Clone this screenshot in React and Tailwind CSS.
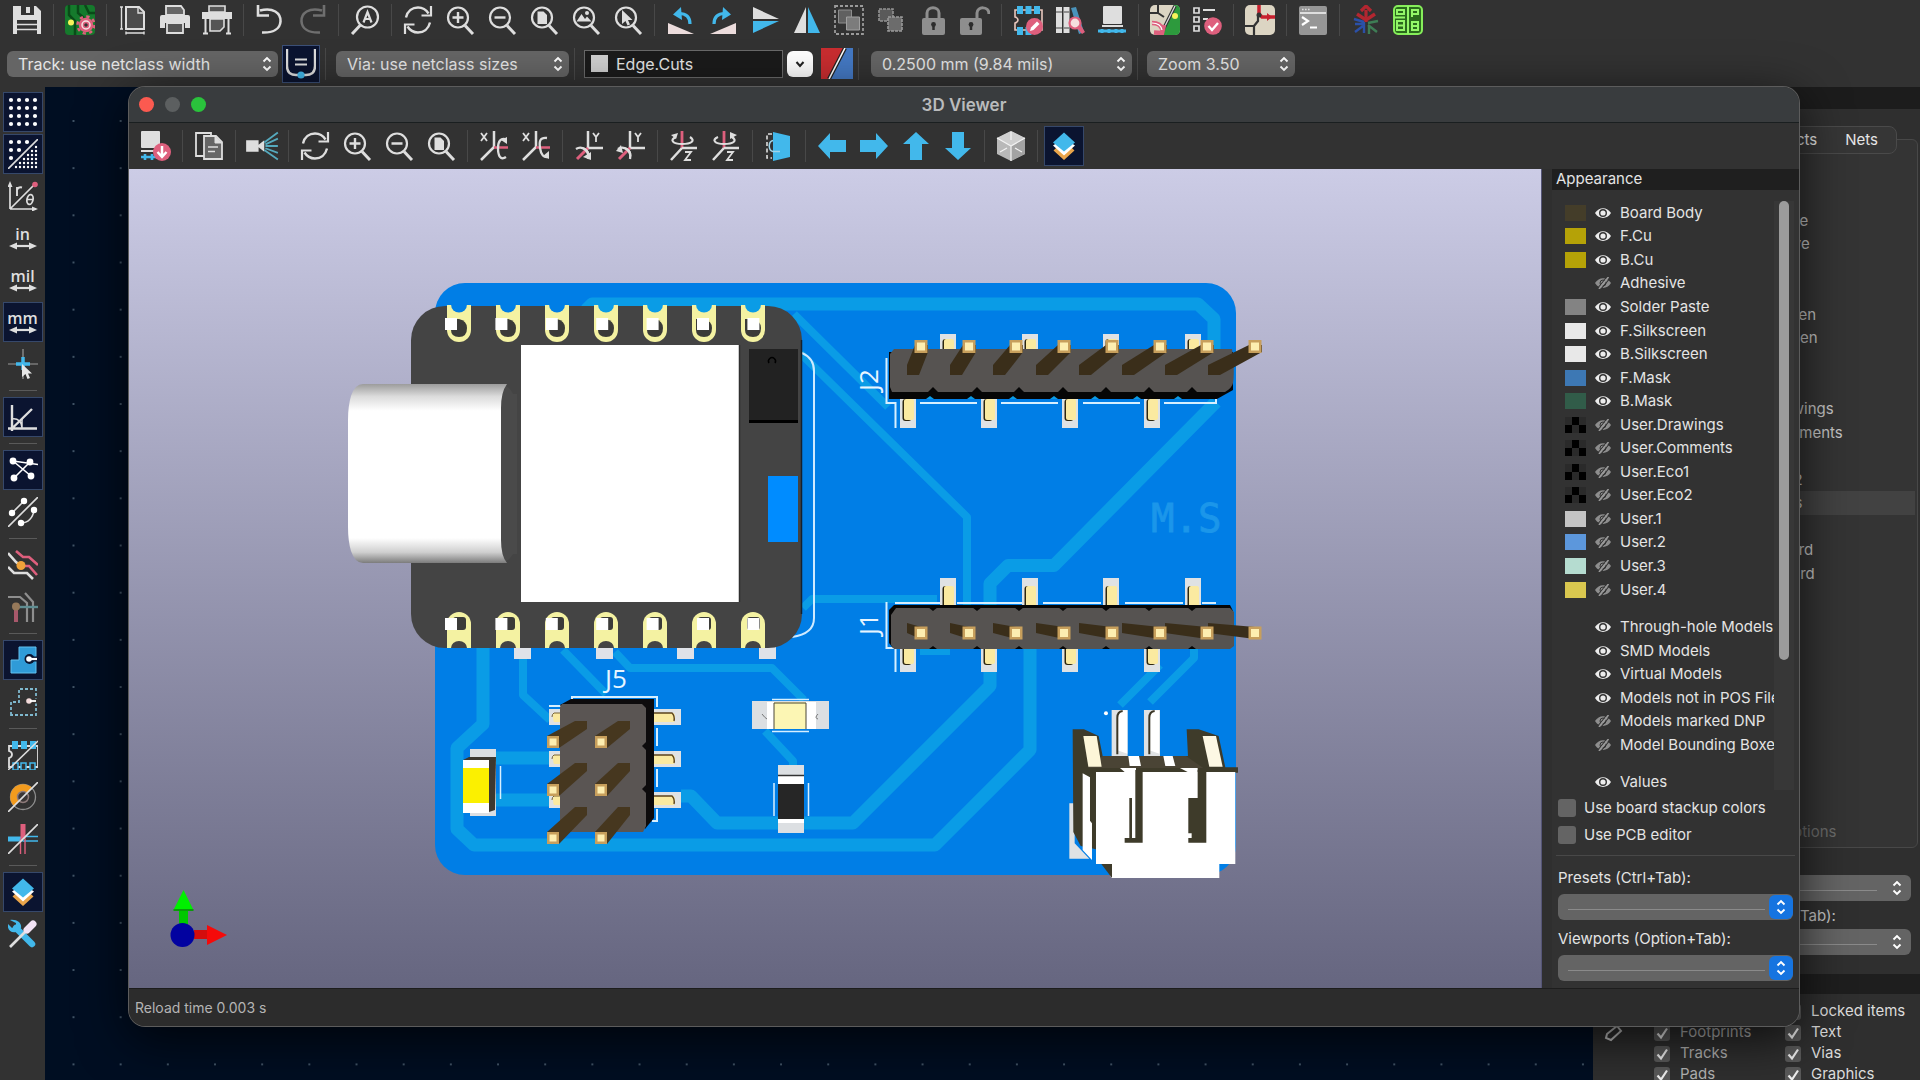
import React from 'react';
import clsx from 'clsx';

const W = '#dedede';
const B = '#42b8eb';
const P = '#de5f7d';

/* ---------- shared icon pieces, all on a 30x30 grid ---------- */

function Svg({ children, className = 'size-[30px]' }) {
  return (
    <svg viewBox="0 0 30 30" className={clsx('shrink-0', className)} fill="none" aria-hidden="true">
      {children}
    </svg>
  );
}

function Lens({ children }) {
  return (
    <Svg>
      <circle cx="13" cy="12.5" r="10" stroke={W} strokeWidth="2.2" />
      <path d="M20 20.5 28 29" stroke={W} strokeWidth="3" />
      {children}
    </Svg>
  );
}

const DocGlyph = <path d="M8.5 6.5h6l3.5 3.5v9H8.5z" fill={W} />;

const RefreshIcon = () => (
  <Svg>
    <path d="M3 12.5C4.500 6 9.500 2.500 15 2.500c4.500 0 8 2 10.500 6M27 17.500C25.500 24 20.500 27.500 15 27.500c-4.500 0-8-2-10.500-6" stroke={W} strokeWidth="2.4" />
    <path d="M28 1v9.500h-9.500M2 29v-9.500h9.500" stroke={W} strokeWidth="2.2" />
  </Svg>
);
const ZoomInIcon = () => <Lens><path d="M13 7v11M7.500 12.500h11" stroke={W} strokeWidth="2.4" /></Lens>;
const ZoomOutIcon = () => <Lens><path d="M7.500 12.500h11" stroke={W} strokeWidth="2.4" /></Lens>;
const ZoomFitIcon = () => <Lens>{DocGlyph}</Lens>;

const LayersIcon = () => (
  <Svg>
    <path d="M15 29 4.500 19.500 8 16l7 6 7-6 3.500 3.500z" fill="#e9a44a" />
    <path d="M15 24.500 4 14.500l3-2 8 6.500 8-6.500 3 2z" fill="#fff" />
    <path d="M15 1.500 26 11.500 15 20.500 4 11.500z" fill={B} />
  </Svg>
);

/* ---------- main toolbar icons ---------- */

const SaveIcon = () => (
  <Svg>
    <path d="M1 1h23l5 5v23H1z" fill={W} />
    <path d="M9 1h13v9H9zM5 15h20v14H5z" fill="#333" />
    <path d="M14 2h4v6h-4z" fill={W} />
    <path d="M5 19.500h20M5 24.500h20" stroke={W} strokeWidth="1.6" />
  </Svg>
);
const BoardSetupIcon = () => (
  <Svg>
    <rect width="30" height="30" rx="4" fill="#157a2c" />
    <path d="M4 0v10l6 6v14M13 0v8l6 5M20 0l4 8h6" stroke="#0a4a18" strokeWidth="2.500" />
    <circle cx="6" cy="17.500" r="3" fill="#f6f35a" />
    <circle cx="21" cy="20" r="6" fill="#f3e3e3" stroke={P} strokeWidth="2.500" />
    <circle cx="21" cy="20" r="8.500" stroke={P} strokeWidth="2.500" strokeDasharray="3.300 3.375" />
    <circle cx="21" cy="20" r="2.500" fill="#333" stroke={P} strokeWidth="1.500" />
  </Svg>
);
const PageIcon = () => (
  <Svg>
    <path d="M8 2h13l5 5v17H8z" fill="#4c4c4c" stroke={W} strokeWidth="2" />
    <path d="M20 2v6h6M3.500 2v22M2 2h3M2 24h3M8 28h18M8 26.500v3M26 26.500v3" stroke={W} strokeWidth="1.400" />
  </Svg>
);
const PrintIcon = () => (
  <Svg>
    <path d="M6 1h15l3 4v5H6z" fill="#666" stroke={W} strokeWidth="1.800" />
    <path d="M2 10h26q2 0 2 2v11h-5v-5H5v5H0V12q0-2 2-2z" fill={W} />
    <path d="M7 18h16v10H7z" fill="#555" stroke={W} strokeWidth="1.800" />
  </Svg>
);
const PlotIcon = () => (
  <Svg>
    <path d="M7 1h16v6H7z" fill="#555" stroke={W} strokeWidth="1.600" />
    <path d="M0 7h30v7H0z" fill={W} />
    <path d="M8 14h14v8l-4 4H8z" fill="#555" stroke={W} strokeWidth="1.600" />
    <path d="M3.500 14v14M26.500 14v14M1 28.500h5M24 28.500h5" stroke={W} strokeWidth="2" />
  </Svg>
);
const UndoIcon = () => (
  <Svg>
    <path d="M5 5.500C18 2 26 8 25.500 16.500 25 24 18 28 7 27.500M3 0v10.500h11" stroke={W} strokeWidth="2.600" />
  </Svg>
);
const RedoIcon = () => (
  <Svg>
    <g transform="translate(30 0) scale(-1 1)">
      <path d="M5 5.500C18 2 26 8 25.500 16.500 25 24 18 28 7 27.500M3 0v10.500h11" stroke="#6f6f6f" strokeWidth="2.600" />
    </g>
  </Svg>
);
const FindIcon = () => (
  <Svg>
    <circle cx="17.500" cy="12" r="10.500" stroke={W} strokeWidth="2.200" />
    <path d="M10.500 20 2 29" stroke={W} strokeWidth="3" />
    <path d="M13.500 17.500 17.500 7l4 10.500M15 14h5" stroke={W} strokeWidth="2.200" />
  </Svg>
);
const ZoomObjectsIcon = () => (
  <Lens>
    <path d="M5.500 16.500 10.500 9l3.500 5 2-2.500 4.500 5z" fill={W} />
    <circle cx="16" cy="8" r="2" fill={W} />
  </Lens>
);
const ZoomSelectIcon = () => <Lens><path d="M9 5v14l3.500-3 2 4.500 2.500-1-2-4.500h4.500z" fill={W} /></Lens>;
const RotateCcwIcon = () => (
  <Svg>
    <path d="M2 29V18l26 11z" fill="#ecdcdc" />
    <path d="M24 19C24 12 20 8.500 13 8.500" stroke={B} strokeWidth="3.200" />
    <path d="M15 2 7 9.500 16 15z" fill={B} />
  </Svg>
);
const RotateCwIcon = () => (
  <Svg>
    <path d="M28 29V18L2 29z" fill="#ecdcdc" />
    <path d="M6 19C6 12 10 8.500 17 8.500" stroke={B} strokeWidth="3.200" />
    <path d="m15 2 8 7.500L14 15z" fill={B} />
  </Svg>
);
const MirrorVIcon = () => (
  <Svg>
    <path d="M3 2 29 14H3z" fill={W} />
    <path d="M3 28 29 16H3z" fill={B} />
  </Svg>
);
const MirrorHIcon = () => (
  <Svg>
    <path d="M2 28 14 2v26z" fill={W} />
    <path d="M28 28 16 2v26z" fill={B} />
  </Svg>
);
const GroupIcon = () => (
  <Svg>
    <rect x="1" y="1" width="28" height="28" stroke="#9a9a9a" strokeWidth="1.800" strokeDasharray="3 2" />
    <path d="M4.500 5h13v13h-13z" fill="#606060" stroke="#8d8d8d" />
    <path d="M12.500 12h13v13h-13z" fill="#7c7c7c" stroke="#a0a0a0" />
  </Svg>
);
const UngroupIcon = () => (
  <Svg>
    <path d="M3 4h14v12H3z" fill="#5a5a5a" stroke="#939393" strokeDasharray="3 1" strokeWidth="1.600" />
    <path d="M12 12h14v14H12z" fill="#6c6c6c" stroke="#9a9a9a" strokeDasharray="3 1" strokeWidth="1.600" />
  </Svg>
);
const LockIcon = () => (
  <Svg>
    <path d="M9 14V8c0-7 12-7 12 0v6" stroke="#8e8e8e" strokeWidth="3" />
    <rect x="4" y="13" width="23" height="17" rx="2" fill="#8e8e8e" />
    <path d="M15.500 19v6" stroke="#2c2c2c" strokeWidth="2.500" />
    <circle cx="15.500" cy="19.500" r="2.400" fill="#2c2c2c" />
  </Svg>
);
const UnlockIcon = () => (
  <Svg>
    <path d="M17 14V8c0-7 12-7 12 1" stroke="#8e8e8e" strokeWidth="3" />
    <rect x="0" y="13" width="22" height="17" rx="2" fill="#8e8e8e" />
    <path d="M11 19v6" stroke="#2c2c2c" strokeWidth="2.500" />
    <circle cx="11" cy="19.500" r="2.400" fill="#2c2c2c" />
  </Svg>
);
const FootprintEditorIcon = () => (
  <Svg>
    <path d="M3 5h26v20H2v-7c4-1 4-5 0-6V5z" stroke="#e8c7bd" strokeWidth="1.600" />
    <path d="M4 1h6v8H4zM12.500 1h6v8h-6zM21 1h6v8h-6zM4 22h6v8H4zM12.500 22h6v8h-6z" fill={B} />
    <circle cx="21.500" cy="21.500" r="8.500" fill={P} />
    <path d="m17 26 1-3.500 6-6 2.500 2.500-6 6z" fill="#fff" />
  </Svg>
);
const LibraryIcon = () => (
  <Svg>
    <path d="M1 2h6v26H1zM8.500 2h6v26h-6z" fill={W} />
    <path d="M1 7h6M1 23h6M8.500 7h6M8.500 23h6" stroke="#777" strokeWidth="1.500" />
    <path d="m16 3 5-1 8 25-5 2z" fill="#4a93bb" />
    <path d="m21 22 6 7 3-2-5-8z" fill={P} />
    <circle cx="20" cy="18" r="5.500" fill="#f5dede" stroke={P} strokeWidth="2.200" />
  </Svg>
);
const UpdatePcbIcon = () => (
  <Svg>
    <rect x="6" y="1" width="19" height="18" rx="1" fill={W} />
    <path d="M5 21h21" stroke={W} strokeWidth="2" />
    <path d="M1 26h28M5 24v4M12 24v4M19 24v4M25 24v4" stroke={B} strokeWidth="3" />
  </Svg>
);
const SchematicSyncIcon = () => (
  <Svg>
    <rect width="30" height="30" rx="5" fill="#dcd5c3" />
    <path d="M24 0h1q5 0 5 5v20q0 5-5 5H11z" fill="#2d9a3d" />
    <path d="M8 0v8H0M8 8l6 4" stroke="#333" strokeWidth="2" />
    <path d="M25 1 12 27" stroke="#333" strokeWidth="3.500" />
    <path d="M25 1 12 27" stroke="#ddd" strokeWidth="1.200" />
    <circle cx="25" cy="11" r="3" fill="#f6f35a" />
    <path d="M2 18c6 0 9 2 10 6M4 27.500l8 .5 2-8" stroke={P} strokeWidth="4.500" />
    <path d="M2 18c6 0 9 2 10 7" stroke="#fff" strokeWidth="1.200" />
  </Svg>
);
const DrcIcon = () => (
  <Svg>
    <path d="M2 3h5v5H2zM2 12h5v5H2zM2 21h5v5H2z" stroke={W} strokeWidth="1.700" />
    <path d="M11 5h12M11 14h5" stroke={W} strokeWidth="2" />
    <circle cx="21" cy="21" r="8.800" fill={P} />
    <path d="m16.500 21 3.500 4 6-7" stroke="#fff" strokeWidth="2.400" />
  </Svg>
);
const SchematicIcon = () => (
  <Svg>
    <rect width="30" height="30" rx="5" fill="#dcd5c3" />
    <path d="M0 21h9v9M9 21l4-5V10" stroke="#333" strokeWidth="2.200" />
    <path d="M14 0v9l3 3h13" stroke="#c8202f" strokeWidth="3.500" />
    <circle cx="14" cy="10" r="2.500" fill="#333" />
    <path d="M22 8v8l5-4z" fill="#c8202f" />
  </Svg>
);
const ConsoleIcon = () => (
  <Svg>
    <rect x="1" y="1" width="28" height="29" rx="2" fill="#969696" />
    <path d="M2 8h26" stroke="#dedede" strokeWidth="2" />
    <path d="M4 4.500h8" stroke={W} strokeWidth="1.600" strokeDasharray="1.600 1.400" />
    <path d="m4 12 6 4-6 4M12 22.500h7" stroke="#fff" strokeWidth="2.200" />
  </Svg>
);
const PluginTreeIcon = () => (
  <Svg>
    <path d="M15 14V5M10 6l5-5 5 5" stroke="#b32630" strokeWidth="3.200" />
    <path d="M6 9l9 6 9-6M15 13v4" stroke="#b32630" strokeWidth="3.400" />
    <path d="M13 17 3 14M12 19H4M12 21l-8 6M13 17v11" stroke="#2b50a8" strokeWidth="2.400" />
    <path d="M17 18l10-2M17 20l9 7M18 20v9" stroke="#3e7d55" strokeWidth="2.400" />
  </Svg>
);
const PluginGridIcon = () => (
  <Svg>
    <rect x="1" y="1" width="28" height="28" rx="4" fill="#2a6a1c" stroke="#86ee5a" strokeWidth="2" />
    <path d="M15 1v28M1 12.500h11M4 5h7v4H4zM4 16h7v9H4zM4 20.500h7M19 12V5h6v4h-5M19 17h6v8h-6zM19 21h6" stroke="#93f768" strokeWidth="2" />
  </Svg>
);

/* ---------- 3D viewer icons ---------- */

const ReloadBoardIcon = () => (
  <Svg>
    <rect x="0" y="0" width="19" height="17" rx="1" fill={W} />
    <path d="M0 20h19" stroke={W} strokeWidth="2" />
    <path d="M0 26h22M4 23v6M11 23v6" stroke={B} strokeWidth="2.600" />
    <circle cx="21" cy="21" r="9" fill={P} />
    <path d="M21 15v10M16.500 21l4.500 5 4.500-5" stroke="#fff" strokeWidth="2.500" />
  </Svg>
);
const CopyIcon = () => (
  <Svg>
    <path d="M2 2h15v23H2z" stroke={W} strokeWidth="1.800" />
    <path d="M10 5h12l6 6v17H10z" fill="#666" stroke={W} strokeWidth="1.800" />
    <path d="M21 5v7h7" fill={W} stroke={W} />
    <path d="M14 16h10M14 20.500h7" stroke={W} strokeWidth="1.600" />
  </Svg>
);
const RaytraceIcon = () => (
  <Svg className="size-[34px]">
    <path d="M1 10h11v10H1zM12 14l5-4v10l-5-4z" fill={W} />
    <path d="m17 12 12-9M18 13.500l11-5M18 15h11M18 17l11 4M17 18.500 29 27" stroke="#55a9bd" strokeWidth="1.600" />
  </Svg>
);

function AxisIcon({ label, flip }) {
  if (label === 'X') {
    return (
      <Svg>
        <path d="M15 0v16M15 16 2 29" stroke={W} strokeWidth="2.500" />
        <path d="M15 16.500h14" stroke={P} strokeWidth="2.500" />
        <path d="m2 2 6 8M8 2l-6 8" stroke={W} strokeWidth="1.800" />
        <path d={flip ? 'M26 7c-7-1-8 3-7 10s4 10 8 9' : 'M27 26c-6 4-8-2-8-9s3-10 7-9'} stroke={W} strokeWidth="2.300" />
        <path d={flip ? 'M28 20v8l-6-3z' : 'M28 13V6l-6 3z'} fill={W} />
      </Svg>
    );
  }
  if (label === 'Y') {
    return (
      <Svg>
        <path d="M14 0v17h15" stroke={W} strokeWidth="2.500" />
        <path d="M14 17 3 28" stroke={P} strokeWidth="3" />
        <path d="m19 2 3 4 3-4M22 6v5" stroke={W} strokeWidth="1.800" />
        <path d="M2 18c6-4 14 2 12 10" stroke={W} strokeWidth="2.300" />
        <path d={flip ? 'M0 20l7 2-2-8z' : 'M9 26l8 3v-8z'} fill={W} />
        <path d="M7 17c4-1 9 4 7 9" stroke={W} strokeWidth="1.800" />
      </Svg>
    );
  }
  return (
    <Svg>
      <path d="M13 0v17" stroke={P} strokeWidth="2.800" />
      <path d="M13 17h15M13 17 2 29" stroke={W} strokeWidth="2.500" />
      <path d="M16 21h6l-6 8h6" stroke={W} strokeWidth="1.800" />
      <path d="M7 6c-7 3-3 7 6 7s14-3 8-7" stroke={W} strokeWidth="2.200" />
      <path d={flip ? 'm19 8 7-4-7-3z' : 'M7 8 2 4l7-2z'} fill={W} />
    </Svg>
  );
}

const OrthoIcon = () => (
  <Svg>
    <path d="M8 3H3v24h5" stroke={W} strokeWidth="1.600" strokeDasharray="4 2.500" />
    <path d="M9 1l17 4v21l-17 4z" fill={B} />
    <path d="M9 9.500c-5 1-5 10 0 11h7" stroke="#9fd4ea" strokeWidth="1.500" />
  </Svg>
);
const LeftIcon = () => <Svg><path d="M1 15 13 2v7h16v12H13v7z" fill={B} /></Svg>;
const RightIcon = () => <Svg><path d="M29 15 17 2v7H1v12h16v7z" fill={B} /></Svg>;
const UpIcon = () => <Svg><path d="M15 1 2 13h7v16h12V13h7z" fill={B} /></Svg>;
const DownIcon = () => <Svg><path d="M15 29 2 17h7V1h12v16h7z" fill={B} /></Svg>;
const CubeIcon = () => (
  <Svg>
    <path d="M15 0 29 7v16l-14 7L1 23V7z" fill="#b9b9b9" />
    <path d="M15 0 29 7l-14 8L1 7z" fill="#cfcfcf" />
    <path d="M15 15 29 7v16l-14 7z" fill="#a3a3a3" />
    <path d="M1 7l14 8 14-8M15 15v15M15 1v8M4 21l7-4M26 21l-7-4" stroke="#f2f2f2" strokeWidth="1.200" />
  </Svg>
);

/* ---------- left bar icons ---------- */

function dots(cols, rows, step, r, x0, y0, keep = () => true) {
  const out = [];
  for (let j = 0; j < rows; j++) {
    for (let i = 0; i < cols; i++) {
      if (keep(i, j)) out.push(<circle key={`${i}-${j}`} cx={x0 + i * step} cy={y0 + j * step} r={r} fill="#fff" />);
    }
  }
  return out;
}

const GridIcon = () => <Svg>{dots(4, 4, 8, 2.1, 3, 3)}</Svg>;
const GridOverrideIcon = () => (
  <Svg>
    {dots(3, 3, 8, 2.1, 3, 3, (i, j) => i + j < 3)}
    {dots(6, 6, 4, 1.2, 8, 8, (i, j) => i + j > 4)}
    <path d="M0 30 30 0" stroke={W} strokeWidth="1.600" />
  </Svg>
);
const PolarIcon = () => (
  <Svg>
    <path d="M2 28V3M2 28h26M2 28 26 4" stroke={W} strokeWidth="1.700" />
    <path d="M2 0l2.500 6h-5zM30 28l-6-2.500v5z" fill={W} />
    <circle cx="27" cy="3.500" r="2.800" fill={P} />
    <path d="M9 15V6M9 9c1-2.500 3-3 5-2.500" stroke={W} strokeWidth="1.900" />
    <ellipse cx="22" cy="18.500" rx="3" ry="5" transform="rotate(12 22 18.500)" stroke={W} strokeWidth="1.800" />
    <path d="M19 18.500h6" stroke={W} strokeWidth="1.500" />
  </Svg>
);
function UnitIcon({ unit }) {
  return (
    <span className="flex flex-col items-center font-['Open_Sans',sans-serif] text-base leading-4 font-semibold text-[#dedede]">
      {unit}
      <svg viewBox="0 0 28 8" className="h-2 w-7" aria-hidden="true">
        <path d="M5 4h18" stroke={W} strokeWidth="2.200" />
        <path d="M0 4l8-3.500v7zM28 4l-8-3.500v7z" fill={W} />
      </svg>
    </span>
  );
}
const CrosshairIcon = () => (
  <Svg>
    <path d="M0 15h30M15 0v30" stroke="#9a9a9a" strokeWidth="1.200" />
    <path d="M15 8v13M8 15h14" stroke={B} strokeWidth="3.500" />
    <path d="M14 15v13l3.500-3 2 5 2.500-1-2-4.500h4z" fill="#e6e6e6" />
  </Svg>
);
const AngleIcon = () => (
  <Svg>
    <path d="M4 3v26M0 26.500h29M4 26.500 24 7" stroke={W} strokeWidth="2.400" />
    <path d="M4 17c6-1 10 3 10 9M14 26v-9" stroke={W} strokeWidth="1.500" />
  </Svg>
);
const RatsnestIcon = () => (
  <Svg>
    <path d="M5 6l25 3.500M5 6l18 15M22 7 6 23" stroke="#fff" strokeWidth="1.600" />
    {[[5, 6], [22, 7], [6, 23], [23, 21]].map(([x, y]) => <circle key={x} cx={x} cy={y} r="3.400" fill="#fff" />)}
  </Svg>
);
const RatsnestCurvedIcon = () => (
  <Svg>
    <path d="M0 30 30 0M4 16 16 4M26 13c-1 8-6 13-13 13" stroke={W} strokeWidth="1.600" />
    {[[4, 16], [16, 4], [26, 13], [13, 26]].map(([x, y]) => <circle key={x} cx={x} cy={y} r="3.200" fill="#fff" />)}
  </Svg>
);
const HighContrastIcon = () => (
  <Svg>
    <path d="M0 3l8 9 5 4M0 17l6 6h13l6 6" stroke={W} strokeWidth="2.600" />
    <path d="M8 1l7 6h6l9 8M16 16h5l8 9" stroke={P} strokeWidth="2.600" />
    <circle cx="13" cy="15.500" r="4.500" fill="#f0a33a" />
  </Svg>
);
const NetHighlightIcon = () => (
  <Svg>
    <path d="M0 5h12l7 6v19M17 1l8 9v20" stroke="#8e8e8e" strokeWidth="2.200" />
    <path d="M8 15h22" stroke="#5f8d92" strokeWidth="2.400" />
    <path d="M8 16v14" stroke="#a8586b" strokeWidth="4" />
    <circle cx="8" cy="14.500" r="4" fill="#96795a" />
  </Svg>
);
const ZoneFillIcon = () => (
  <Svg>
    <path d="M3 28V15h8V2h17v26z" fill="#2f9bd8" stroke="#63c0ee" />
    <circle cx="21.500" cy="14" r="5" fill="#0b1430" />
    <path d="M22 14h8" stroke="#0b1430" strokeWidth="5" />
    <circle cx="21" cy="14" r="2.800" fill="#fff" />
    <path d="M22 14h7" stroke="#fff" strokeWidth="2.200" />
  </Svg>
);
const ZoneOutlineIcon = () => (
  <Svg>
    <path d="M3 28V15h8V2h17v26z" stroke="#7fb9cf" strokeWidth="1.800" strokeDasharray="3 2" />
    <path d="M18 14h12" stroke="#333" strokeWidth="5" />
    <circle cx="21" cy="14" r="2.800" fill="#f2dada" />
    <path d="M22 14h6" stroke="#fff" strokeWidth="1.800" />
  </Svg>
);
const FootprintSketchIcon = () => (
  <Svg>
    <path d="M1 6v5c4 1 4 6 0 7v9h29V6z" stroke={W} strokeWidth="1.800" />
    <path d="M4 1h6v8H4zM13 1h6v8h-6zM22 1h6v8h-6z" fill={B} />
    <path d="M5 23h5v7H5zM13 23h5v7h-5zM22 23h5v7h-5z" fill="#333" stroke={B} strokeWidth="1.500" />
    <path d="M0 30 30 1" stroke={W} strokeWidth="1.600" />
  </Svg>
);
const ViaSketchIcon = () => (
  <Svg>
    <circle cx="15" cy="15" r="12.500" stroke="#8d8d8d" strokeWidth="1.300" />
    <path d="M24 6A12.500 12.500 0 1 0 6 24z" fill="#f29b1e" />
    <circle cx="15" cy="15" r="5.500" fill="#3a3636" stroke="#8d7a7a" strokeWidth="1.500" />
    <path d="M0 30 30 0" stroke={W} strokeWidth="1.600" />
  </Svg>
);
const TrackSketchIcon = () => (
  <Svg>
    <path d="M0 15h15" stroke={B} strokeWidth="5" />
    <path d="M15 12.500h15M15 17h15" stroke={B} strokeWidth="1.400" />
    <path d="M15 0v15" stroke={P} strokeWidth="5" />
    <path d="M12.500 15v15M17 15v15" stroke={P} strokeWidth="1.400" />
    <path d="M0 30 30 0" stroke={W} strokeWidth="1.600" />
  </Svg>
);
const ToolsIcon = () => (
  <Svg>
    <path d="M8 9 24 25" stroke={B} strokeWidth="6.500" strokeLinecap="round" />
    <path d="M2 1l6 3v4l-4 1-4-4c-1 6 3 9 8 8l5-4C14 4 9 0 2 1z" fill={B} />
    <path d="M2 28 18 12" stroke={W} strokeWidth="2.600" />
    <path d="m19 11 6-6" stroke="#f3e3f5" strokeWidth="7" strokeLinecap="round" />
  </Svg>
);

/* ---------- controls ---------- */

function ToolButton({ icon: Icon, label, active, ...rest }) {
  return (
    <button type="button" aria-label={label} title={label} className="flex h-[42px] w-[42px] shrink-0 items-center justify-center">
      <span
        className={clsx(
          'flex size-10 items-center justify-center border',
          active ? 'border-[#36486a] bg-[#0b1430]' : 'border-transparent'
        )}
      >
        <Icon {...rest} />
      </span>
    </button>
  );
}

const Divider = () => <span className="mx-[5px] h-8 w-px shrink-0 bg-[#484848]" />;
const HDivider = () => <span className="my-[5px] h-px w-7 shrink-0 bg-[#5a5a5a]" />;

function Chevrons() {
  return (
    <svg viewBox="0 0 10 18" className="h-[18px] w-2.5" fill="none" stroke="#fff" strokeWidth="1.900" aria-hidden="true">
      <path d="M1.500 6.500 5 3l3.500 3.500M1.500 11.500 5 15l3.500-3.500" />
    </svg>
  );
}

function Dropdown({ label, value, className }) {
  return (
    <span className={clsx('relative flex h-[26px] shrink-0', className)}>
      <select aria-label={label} className="w-full appearance-none rounded-md bg-[#656565] pr-8 pl-[11px] text-base text-[#e6e6e6]">
        <option>{value}</option>
      </select>
      <span className="pointer-events-none absolute inset-y-0 right-1.5 flex items-center">
        <Chevrons />
      </span>
    </span>
  );
}

function LineDropdown({ id, accent }) {
  return (
    <span className="relative flex h-[26px]">
      <select id={id} className="w-full appearance-none rounded-md bg-[#646464] px-2.5">
        <option value=""></option>
      </select>
      <span className={clsx('pointer-events-none absolute inset-0 flex items-center pl-2.5', accent ? 'gap-1' : 'gap-2')}>
        <span className="mt-1 h-px flex-1 bg-[#8a8a8a]" />
        <span className={clsx('flex h-6 w-6 items-center justify-center rounded-md', accent ? 'bg-[#1674e0]' : 'mr-0.5')}>
          <Chevrons />
        </span>
      </span>
    </span>
  );
}

const TOP_TOOLS = [
  ['Save', SaveIcon], null,
  ['Board Setup', BoardSetupIcon], null,
  ['Page Settings', PageIcon], ['Print', PrintIcon], ['Plot', PlotIcon], null,
  ['Undo', UndoIcon], ['Redo', RedoIcon], null,
  ['Find', FindIcon], null,
  ['Refresh', RefreshIcon], ['Zoom In', ZoomInIcon], ['Zoom Out', ZoomOutIcon],
  ['Zoom to Fit', ZoomFitIcon], ['Zoom to Objects', ZoomObjectsIcon], ['Zoom to Selection', ZoomSelectIcon], null,
  ['Rotate Counterclockwise', RotateCcwIcon], ['Rotate Clockwise', RotateCwIcon],
  ['Mirror Vertically', MirrorVIcon], ['Mirror Horizontally', MirrorHIcon],
  ['Group', GroupIcon], ['Ungroup', UngroupIcon], ['Lock', LockIcon], ['Unlock', UnlockIcon], null,
  ['Footprint Editor', FootprintEditorIcon], ['Footprint Library', LibraryIcon], ['Update PCB', UpdatePcbIcon], null,
  ['Update from Schematic', SchematicSyncIcon], ['Design Rules Checker', DrcIcon], null,
  ['Schematic Editor', SchematicIcon], null,
  ['Scripting Console', ConsoleIcon], null,
  ['Tree Plugin', PluginTreeIcon], ['Fabrication Plugin', PluginGridIcon],
];

const VIEWER_TOOLS = [
  ['Reload Board', ReloadBoardIcon], null,
  ['Copy Image', CopyIcon], null,
  ['Raytracing', RaytraceIcon], null,
  ['Redraw', RefreshIcon], ['Zoom In', ZoomInIcon], ['Zoom Out', ZoomOutIcon], ['Fit', ZoomFitIcon], null,
  ['Rotate X Clockwise', AxisIcon, { axis: 'X' }], ['Rotate X Counterclockwise', AxisIcon, { axis: 'X', flip: true }], null,
  ['Rotate Y Clockwise', AxisIcon, { axis: 'Y' }], ['Rotate Y Counterclockwise', AxisIcon, { axis: 'Y', flip: true }], null,
  ['Rotate Z Clockwise', AxisIcon, { axis: 'Z' }], ['Rotate Z Counterclockwise', AxisIcon, { axis: 'Z', flip: true }], null,
  ['Flip Board', OrthoIcon], null,
  ['Move Left', LeftIcon], ['Move Right', RightIcon], ['Move Up', UpIcon], ['Move Down', DownIcon], null,
  ['Orthographic', CubeIcon], null,
  ['Appearance Manager', LayersIcon, { active: true }],
];

const SIDE_TOOLS = [
  ['Grid', GridIcon, true], ['Grid Overrides', GridOverrideIcon, true], ['Polar Coordinates', PolarIcon],
  ['Inches', () => <UnitIcon unit="in" />], ['Mils', () => <UnitIcon unit="mil" />], ['Millimeters', () => <UnitIcon unit="mm" />, true],
  ['Full Crosshair', CrosshairIcon], null,
  ['Constrain Angle', AngleIcon, true], null,
  ['Ratsnest', RatsnestIcon, true], ['Curved Ratsnest', RatsnestCurvedIcon], null,
  ['Contrast Mode', HighContrastIcon], ['Net Highlight', NetHighlightIcon], null,
  ['Zone Fill', ZoneFillIcon, true], ['Zone Outline', ZoneOutlineIcon], null,
  ['Sketch Footprints', FootprintSketchIcon], ['Sketch Vias', ViaSketchIcon], ['Sketch Tracks', TrackSketchIcon], null,
  ['Layers Manager', LayersIcon, true], ['Properties', ToolsIcon],
];

function TopToolbar() {
  return (
    <header className="flex shrink-0 flex-col bg-[#323232]">
      <div className="flex h-10 items-center pl-1.5">
        {TOP_TOOLS.map((t, i) => (t ? <ToolButton key={i} label={t[0]} icon={t[1]} /> : <Divider key={i} />))}
      </div>
      <div className="flex h-[47px] items-center pl-[7px]">
        <Dropdown label="Track width" value="Track: use netclass width" className="w-[271px]" />
        <button type="button" aria-label="Use existing track width" className="ml-1 flex size-[38px] items-center justify-center border border-[#3c5078] bg-[#0b1430]">
          <Svg>
            <path d="M1 0v17q0 9 9 9h10q9 0 9-9V0" stroke={W} strokeWidth="2.400" />
            <path d="M9 10.500h12M9 15.500h12" stroke={W} strokeWidth="1.800" />
            <circle cx="15" cy="26" r="3.600" fill={B} />
          </Svg>
        </button>
        <Divider />
        <Dropdown label="Via size" value="Via: use netclass sizes" className="ml-[5px] w-[233px]" />
        <Divider />
        <label className="ml-1 flex h-7 w-[199px] items-center gap-2 border border-[#6a6a6a] bg-[#1b1b1b] pl-1.5">
          <span className="size-[17px] shrink-0 bg-[#cfcfcf]" />
          <input aria-label="Active layer" defaultValue="Edge.Cuts" className="w-full min-w-0 bg-transparent text-base text-[#e6e6e6]" />
        </label>
        <button type="button" aria-label="Choose layer" className="ml-1 flex h-[26px] w-[26px] items-center justify-center rounded-md bg-white">
          <svg viewBox="0 0 10 8" className="h-2 w-2.5" fill="none" stroke="#222" strokeWidth="2" aria-hidden="true"><path d="m1.500 2 3.500 4 3.500-4" /></svg>
        </button>
        <button type="button" aria-label="Layer pair" className="ml-2 h-[31px] w-8">
          <svg viewBox="0 0 32 31" className="size-full" aria-hidden="true">
            <path d="M0 0h32v31H0z" fill="#4479c4" />
            <path d="M0 0h24L8 31H0z" fill="#c92d30" />
            <path d="M24 0 8 31" stroke="#222" strokeWidth="4" />
            <path d="M24 0 8 31" stroke="#fff" strokeWidth="1.600" />
          </svg>
        </button>
        <Divider />
        <Dropdown label="Grid" value="0.2500 mm (9.84 mils)" className="ml-[7px] w-[261px]" />
        <Divider />
        <Dropdown label="Zoom" value="Zoom 3.50" className="ml-1 w-[148px]" />
      </div>
    </header>
  );
}

function SideToolbar() {
  return (
    <nav className="flex w-[45px] shrink-0 flex-col items-center bg-[#323232] pt-1">
      {SIDE_TOOLS.map((t, i) => (t ? <ToolButton key={i} label={t[0]} icon={t[1]} active={t[2]} /> : <HDivider key={i} />))}
    </nav>
  );
}

/* ---------- board scene ---------- */

const PAD_X = [459, 508, 557, 606, 655, 704, 753];
const TOP_PADS = [948, 1030, 1111, 1193];
const BOTTOM_PADS = [908, 989, 1070, 1152];
const PIN_TOP = [921, 969, 1016, 1064, 1112, 1160, 1207, 1255];
const PIN_BASE = [907, 950, 993, 1036, 1079, 1122, 1165, 1208];

function Pin({ x, y, size = 12 }) {
  return (
    <g>
      <rect x={x - size / 2} y={y - size / 2} width={size} height={size} fill="#c79f5c" />
      <rect x={x - size / 2 + 2.5} y={y - size / 2 + 2.5} width={size - 5} height={size - 5} fill="#fdeeb0" />
    </g>
  );
}

function SmdPad({ x, y, h, pinY, pinH }) {
  return (
    <g>
      <rect x={x - 8} y={y} width="16" height={h} fill="#dfe2e4" />
      <rect x={x - 5.500} y={pinY} width="9" height={pinH} rx="3" fill="#2e2710" />
      <rect x={x - 4} y={pinY} width="10" height={pinH - 1} rx="2" fill="#fbeaa0" />
    </g>
  );
}

function Module() {
  return (
    <g>
      <path d="M802 353q12 5 12 18v247q0 16-22 19" fill="none" stroke="#cfeaff" strokeWidth="2" />
      {[514, 596, 677, 759].map((x) => <rect key={x} x={x} y="642" width="17" height="17" fill="#dfe2e8" />)}
      <rect x="411" y="306" width="391" height="342" rx="34" fill="#444" />
      <path d="M801.500 340v274" stroke="#16202c" strokeWidth="1.500" />
      {PAD_X.map((x, i) => {
        const sq = 445 + i * 50.4;
        return (
          <g key={x}>
            <path d={`M${x - 12} 305h24v25a12 12 0 0 1-24 0z`} fill="#f4f2a2" />
            <path d={`M${x - 8} 304.500a8 8 0 0 0 16 0z`} fill={i < 3 ? '#007ee6' : '#0a9ce6'} />
            <path d={`M${x - 8} 319h8q8 2 8 9 0 9-8 9-8 0-8-7z`} fill="#3b3b38" />
            <rect x={sq} y="318" width="12" height="12" fill="#fff" />
            <path d={`M${x - 12} 648v-24a12 12 0 0 1 24 0v24z`} fill="#f4f2a2" />
            <path d={`M${x - 8} 648a8 7 0 0 1 16 0z`} fill="#444" />
            <rect x={x - 6} y="617" width="13" height="13" rx="3" fill="#3b3b38" />
            <rect x={sq} y="618" width="12" height="12" fill="#fff" />
          </g>
        );
      })}
      <path d="M500 384q10 2 13 10h4v160h-4q-4 8-13 9z" fill="#4a4a4a" />
      <path d="M363 384H507q-6 8-6 24v132q0 16 6 23H363q-8 0-12-12-3-10-3-24V420q0-14 3-24 4-12 12-12z" fill="url(#usb)" />
      <rect x="521" y="345" width="218" height="257" fill="#fff" />
      <path d="M739.500 345v257" stroke="#2f2f2f" strokeWidth="1.500" />
      <rect x="749" y="349" width="49" height="74" fill="#222" />
      <path d="M749 421.500h49" stroke="#000" strokeWidth="3" />
      <path d="M769 363a3.500 3.500 0 1 1 6 0" fill="none" stroke="#000" strokeWidth="1.500" />
      <rect x="768" y="476" width="30" height="66" fill="#008cff" />
    </g>
  );
}

function Traces() {
  return (
    <g fill="none" stroke="#0a9ce6" strokeLinejoin="round">
      <g strokeWidth="13">
        <path d="M586 310l6-6h606l16 15v30" />
        <path d="M1216 402l-162 163.500h-46l-18 18v24" />
        <path d="M990 645v41L853 823H717l-26-27h-10" />
        <path d="M1030 645v105l-95 95H474l-17-16v-81l26-24v-84" />
        <path d="M495 758h60M495 800h60" />
      </g>
      <g strokeWidth="8">
        <path d="M794 314l94 93M800 353l167 164v123" />
        <path d="M803 608l9-9h125" />
        <path d="M563 650l43 44M523 650v45l27 25M615 652l15 16h142l32 32M765 731l28 30v8" />
        <path d="M1194 645v13l-44 44M1160 665l-40 40M920 651h30" />
      </g>
    </g>
  );
}

function HeaderJ2() {
  return (
    <g>
      <path d="M886.500 358v45h9v25M920 403h57M1001 403h57M1083 403h57M1164 403h52v-8" fill="none" stroke="#d6efff" strokeWidth="2" />
      {TOP_PADS.map((x) => <SmdPad key={x} x={x} y={334} h={20} pinY={339} pinH={16} />)}
      <path d="M889 352h344v38l-16 9H889z" fill="#060606" />
      <path d="M894 349h338q3 22 1 34-1 5-8 9H892l-2-5v-33z" fill="#565351" />
      {[933, 977, 1019, 1063, 1106, 1149, 1192].map((x) => <path key={x} d={`M${x - 6} 393l6-6 6 6z`} fill="#060606" />)}
      {[930, 971, 1013, 1054, 1095, 1137, 1178].map((x) => <path key={x} d={`M${x - 4} 399l4-3 4 3z`} fill="#0a9ce6" />)}
      {PIN_TOP.map((x, i) => (
        <path key={x} d={`M${PIN_BASE[i]} 375v-10L${x - 6} 345h13v7L${PIN_BASE[i] + 12} 375z`} fill="#3a2e1a" />
      ))}
      {PIN_TOP.map((x) => <Pin key={x} x={x} y={346.500} size={13} />)}
      {BOTTOM_PADS.map((x) => <SmdPad key={x} x={x} y={399} h={29} pinY={399} pinH={22} />)}
      <text transform="translate(878 391) rotate(-90)" fontSize="26" className="font-['Open_Sans',sans-serif] font-medium" fill="#e8f5ff">J2</text>
    </g>
  );
}

function HeaderJ1() {
  return (
    <g>
      <path d="M886.500 602v46h9v24M895 603h45M957 603h65M1043 603h58M1125 603h58M1202 603h14" fill="none" stroke="#d6efff" strokeWidth="2" />
      {TOP_PADS.map((x) => <SmdPad key={x} x={x} y={578} h={29} pinY={586} pinH={23} />)}
      {BOTTOM_PADS.map((x) => <SmdPad key={x} x={x} y={647} h={25} pinY={645} pinH={20} />)}
      <path d="M889 610l5-5h336l3 6v34l-4 3H893l-4-5z" fill="#060606" />
      <path d="M896 608h334l4 4v34l-4 3H894l-3-4v-30z" fill="#565351" />
      {[933, 977, 1019, 1063, 1106, 1149, 1192].map((x) => <path key={x} d={`M${x - 5} 607h10l-5 4zM${x - 4} 649h8l-4-3z`} fill="#060606" />)}
      {PIN_TOP.map((x, i) => <path key={x} d={`M${PIN_BASE[i]} 623v10L${x} 639v-12z`} fill="#3a2e1a" />)}
      {PIN_TOP.map((x) => <Pin key={x} x={x} y={633} size={13} />)}
      <text transform="translate(878 635) rotate(-90)" fontSize="26" className="font-['Open_Sans',sans-serif] font-medium" fill="#e8f5ff">J1</text>
    </g>
  );
}

function HeaderJ5() {
  return (
    <g>
      <text x="605" y="688" fontSize="26" className="font-['Open_Sans',sans-serif] font-medium" fill="#e8f5ff">J5</text>
      <path d="M572 707V697h85v10M657 728v18M657 769v18M657 809v12h-5M549 706h14" fill="none" stroke="#d6efff" strokeWidth="2" />
      {[709, 751, 792].map((y) => (
        <g key={y}>
          <rect x="549" y={y} width="12" height="16" fill="#dfe2e4" />
          <path d={`M560 ${y + 4}h-6q-2 4 0 9h6z`} fill="#fbeaa0" />
          <path d={`M560 ${y + 4}h-6q-2 1-2 4`} fill="none" stroke="#7a6434" />
          <rect x="653" y={y} width="28" height="16" fill="#dfe2e4" />
          <path d={`M653 ${y + 4}h21q2 4 0 9h-21z`} fill="#fbeaa0" />
          <path d={`M653 ${y + 4}h19q3 3 2 8`} fill="none" stroke="#5c431c" strokeWidth="1.400" />
        </g>
      ))}
      <path d="M560 705l11-6h83v119l-9 11z" fill="#0d0b0c" />
      <path d="M562 704h80l4 4v118l-3 6h-80l-3-4V707z" fill="#5a5553" />
      {[746, 789].map((y) => <path key={y} d={`M642 ${y}l5-5 5 5-5 5z`} fill="#0d0b0c" />)}
      {[742, 790, 838].map((y, r) =>
        [553, 601].map((x, c) => {
          const bx = [578, 621][c];
          const by = [721, 763, 807][r];
          return (
            <g key={`${x}-${y}`}>
              <path d={`M${x - 6} ${y - 6}L${bx - 3} ${by}h12v8L${x + 6} ${y + 6}z`} fill="#46371f" />
              <Pin x={x} y={y} />
            </g>
          );
        })
      )}
    </g>
  );
}

function SmallParts() {
  return (
    <g>
      <rect x="470" y="749" width="26" height="67" fill="#dcdfe2" />
      <path d="M463 760l6-3h27l-1 53-6 2z" fill="#3d3830" />
      <rect x="463" y="760" width="26" height="53" fill="#fff" />
      <rect x="463" y="768" width="26" height="35" fill="#fbf000" />
      <path d="M500.500 766v33" stroke="#d6efff" strokeWidth="1.500" />

      <rect x="752" y="701" width="77" height="28" fill="#dcdfe2" />
      <rect x="767" y="702" width="49" height="27" fill="#fff" />
      <rect x="774" y="702" width="32" height="27" fill="#fcf6b4" />
      <path d="M774 703v26M806 703v26M774 703h32" stroke="#4a4636" />
      <path d="M772 699.500h37M772 731.500h37" stroke="#d6efff" strokeWidth="1.500" />
      <path d="M762 714q3 4 5 5M818 714q-4 4 0 5" fill="none" stroke="#777" />

      <rect x="778" y="765" width="26" height="68" fill="#dcdfe2" />
      <rect x="778" y="775" width="26" height="48" fill="#fff" />
      <path d="M778 775.500h26" stroke="#333" strokeWidth="1.500" />
      <rect x="778" y="784" width="26" height="35" fill="#262626" />
      <path d="M774 783v33M808.500 783v33" stroke="#d6efff" strokeWidth="1.500" />
    </g>
  );
}

function Connector() {
  return (
    <g transform="translate(1000 660) scale(0.3333)">
      <circle cx="318" cy="160" r="6" fill="#fff" />
      <path d="M335 150h48v140h-48zM432 150h48v140h-48z" fill="#dfe2e4" />
      <path d="M352 165q4-14 16-14h14v130l-30-10zM448 165q4-14 16-14h14v130l-30-10z" fill="#fff" />
      <path d="M368 153q-16 2-16 20v110M464 153q-16 2-16 20v110" fill="none" stroke="#3b3626" strokeWidth="6" />
      <path d="M208 430h16v120l44 46h-60z" fill="#dfe2e4" />
      <path d="M218 208h34l44 20 12 60h256l-4-80h36l60 20 20 94h38v16H288v230l-46-10-22-42z" fill="#3e3b2a" />
      <path d="M308 288h250l52 36H262z" fill="#4a4435" />
      <path d="M250 228h40l15 92h-40z" fill="#fdf6d8" />
      <path d="M608 228h40l20 92h-40z" fill="#fdf8e4" />
      <path d="M385 288h32l6 30h-34zM490 288h28l8 30h-30z" fill="#fff" />
      <path d="M248 340l22 12v130l6 8v110l-28-30z" fill="#fff" />
      <path d="M288 336h418v276h-48v42H334l-16-42h-30z" fill="#fff" />
      <path d="M304 612h32v42z" fill="#3e3b2a" />
      <path d="M360 324h48v12h-34zM540 324h53v12h-30z" fill="#fff" />
      <path d="M406 330h22v218h-54v-14h14V414h8v120h10zM593 330h26v218h-54v-14h10v-14h-10V414h28z" fill="#3e3b2a" />
    </g>
  );
}

function BoardScene() {
  return (
    <svg viewBox="129 169 1412 819" className="h-full w-full" role="img" aria-label="Board model">
      <defs>
        <linearGradient id="usb" x1="0" y1="0" x2="0" y2="1">
          <stop offset="0" stopColor="#9c9c9c" />
          <stop offset="0.070" stopColor="#dcdcdc" />
          <stop offset="0.150" stopColor="#fff" />
          <stop offset="0.860" stopColor="#fff" />
          <stop offset="0.940" stopColor="#cfcfcf" />
          <stop offset="1" stopColor="#7c7c7c" />
        </linearGradient>
      </defs>
      <rect x="435" y="283" width="801" height="592" rx="30" fill="#007ee6" />
      <Traces />
      <text x="1151" y="532" fontSize="39" className="font-['DejaVu_Sans_Mono',monospace]" fill="#1b96ea" stroke="#1b96ea" strokeWidth="0.800">M.S</text>
      <Module />
      <SmallParts />
      <HeaderJ2 />
      <HeaderJ1 />
      <HeaderJ5 />
      <Connector />
      <g>
        <path d="M179 909h9v20h-9z" fill="#00c800" />
        <path d="M183.500 890l10 20h-20z" fill="#00f000" />
        <path d="M173.500 910h20" stroke="#0a9a0a" strokeWidth="2" />
        <path d="M194 930h14v9h-14z" fill="#d40d0d" />
        <path d="M207 925v20l20-10z" fill="#f50a0a" />
        <circle cx="182.500" cy="935" r="12" fill="#0202a0" />
      </g>
    </svg>
  );
}

/* ---------- 3D viewer window ---------- */

const LAYERS = [
  ['Board Body', 'bg-[#443d29]', true],
  ['F.Cu', 'bg-[#b5a207]', true],
  ['B.Cu', 'bg-[#b5a207]', true],
  ['Adhesive', '', false],
  ['Solder Paste', 'bg-[#838383]', true],
  ['F.Silkscreen', 'bg-[#e8e8e8]', true],
  ['B.Silkscreen', 'bg-[#e8e8e8]', true],
  ['F.Mask', 'bg-[#3d78b4]', true],
  ['B.Mask', 'bg-[#315c49]', true],
  ['User.Drawings', 'checker', false],
  ['User.Comments', 'checker', false],
  ['User.Eco1', 'checker', false],
  ['User.Eco2', 'checker', false],
  ['User.1', 'bg-[#c4c4c4]', false],
  ['User.2', 'bg-[#5c97dc]', false],
  ['User.3', 'bg-[#b5dcd0]', false],
  ['User.4', 'bg-[#d9c74f]', false],
  null,
  ['Through-hole Models', '', true],
  ['SMD Models', '', true],
  ['Virtual Models', '', true],
  ['Models not in POS File', '', true],
  ['Models marked DNP', '', false],
  ['Model Bounding Boxes', '', false],
  null,
  ['Values', '', true],
];

function Eye({ on }) {
  return on ? (
    <svg viewBox="0 0 18 12" className="h-3 w-[18px]" aria-hidden="true">
      <path d="M1 6c4-6.500 12-6.500 16 0-4 6.500-12 6.500-16 0z" fill="#ececec" />
      <circle cx="9" cy="6" r="3.300" fill="none" stroke="#333" strokeWidth="1.400" />
    </svg>
  ) : (
    <svg viewBox="0 0 18 12" className="h-3 w-[18px]" fill="none" aria-hidden="true">
      <path d="M1 6c4-6.500 12-6.500 16 0-4 6.500-12 6.500-16 0z" fill="#8e8e8e" />
      <circle cx="9" cy="6" r="3" stroke="#333" strokeWidth="1" />
      <path d="M3 12 12 1M7 12 17 0" stroke="#333" strokeWidth="1.100" />
      <path d="M5 12 14.500 0" stroke="#999" strokeWidth="1.600" />
    </svg>
  );
}

function Swatch({ fill }) {
  if (fill === 'checker') {
    return (
      <svg viewBox="0 0 21 16" className="h-4 w-[21px]" aria-hidden="true">
        <path d="M0 0h21v16H0z" fill="#2a2a2a" />
        <path d="M7 0h7v8H7zM0 8h7v8H0zM14 8h7v8h-7z" fill="#000" />
      </svg>
    );
  }
  return <span className={clsx('h-4 w-[21px]', fill)} />;
}

function AppearancePanel() {
  return (
    <aside className="flex w-[247px] shrink-0 flex-col bg-[#323232] text-[#e4e4e4]">
      <h2 className="h-[21px] shrink-0 bg-[#1f1f1f] pl-1 text-[15px] leading-5">Appearance</h2>
      <div className="flex min-h-0 flex-1 pt-[11px] pl-[13px]">
        <ul className="flex min-w-0 flex-1 flex-col text-[15px]">
          {LAYERS.map((row, i) =>
            row ? (
              <li key={i} className="flex min-h-0 flex-1 items-center">
                <Swatch fill={row[1]} />
                <button type="button" aria-label={`Toggle ${row[0]}`} aria-pressed={row[2]} className="mx-2 flex">
                  <Eye on={row[2]} />
                </button>
                <span className="min-w-0 flex-1 overflow-hidden leading-5 whitespace-nowrap">{row[0]}</span>
              </li>
            ) : (
              <li key={i} className="h-3.5 shrink-0" />
            )
          )}
        </ul>
        <div className="mr-[5px] mb-1 flex w-5 justify-center bg-[#373737]">
          <div className="h-[78%] w-2.5 rounded-full bg-[#9b9b9b]" />
        </div>
      </div>
      <div className="flex flex-col gap-[7px] pt-1 pb-2.5 pl-1.5 text-[15px] leading-5">
        {['Use board stackup colors', 'Use PCB editor'].map((text) => (
          <label key={text} className="flex items-center gap-2 whitespace-nowrap">
            <input type="checkbox" className="size-[18px] appearance-none rounded-[3px] bg-[#646464]" />
            {text}
          </label>
        ))}
      </div>
      <div className="mx-1 flex flex-col border-t border-[#484848] pt-3 pr-[2px] pb-[7px] pl-[2px] text-[15px] leading-5">
        <label htmlFor="presets" className="mb-1.5">Presets (Ctrl+Tab):</label>
        <LineDropdown id="presets" accent />
        <label htmlFor="viewports" className="mt-[9px] mb-1.5">Viewports (Option+Tab):</label>
        <LineDropdown id="viewports" accent />
      </div>
    </aside>
  );
}

function ViewerWindow() {
  return (
    <section className="absolute top-[87px] right-[121px] bottom-[54px] left-[129px] flex flex-col overflow-hidden rounded-[16px] bg-[#2e2e2e] shadow-[0_12px_50px_rgba(0,0,0,0.75)] ring-1 ring-[#5c5c5c]">
      <div className="flex h-9 shrink-0 items-center border-b border-[#1a1f20] bg-[#393c3e] px-2.5">
        <div className="flex flex-1 gap-[11px]">
          <button type="button" aria-label="Close" className="size-[15px] rounded-full bg-[#fb5a50]" />
          <button type="button" aria-label="Minimize" className="size-[15px] rounded-full bg-[#5c5f60]" />
          <button type="button" aria-label="Full screen" className="size-[15px] rounded-full bg-[#2ac23c]" />
        </div>
        <h1 className="text-[17px] leading-5 font-semibold text-[#b9bbbc]">3D Viewer</h1>
        <div className="flex-1" />
      </div>
      <div className="flex h-[46px] shrink-0 items-center bg-[#323232] pl-1.5">
        {VIEWER_TOOLS.map((t, i) => {
          if (!t) return <Divider key={i} />;
          const [label, icon, opts = {}] = t;
          const Icon = opts.axis ? () => <AxisIcon label={opts.axis} flip={opts.flip} /> : icon;
          return <ToolButton key={i} label={label} icon={Icon} active={opts.active} />;
        })}
      </div>
      <div className="flex min-h-0 flex-1">
        <div className="min-w-0 flex-1 bg-linear-to-b from-[#cccce6] to-[#666680]">
          <BoardScene />
        </div>
        <div className="w-[11px] shrink-0 border-l border-[#555577] bg-[#2f2f2f]" />
        <AppearancePanel />
      </div>
      <footer className="flex h-[38px] shrink-0 items-center border-t border-[#1d1d1d] bg-[#2c2c2c] pl-1.5 text-sm text-[#b4b4b4]">
        Reload time 0.003 s
      </footer>
    </section>
  );
}

/* ---------- editor behind the viewer ---------- */

// short names never reach past the viewer's edge, so their rows stay blank
const EDITOR_LAYERS = [
  '', '', 'F.Adhesive', 'B.Adhesive', '', '', 'F.Silkscreen', 'B.Silkscreen', '', '',
  'User.Drawings', 'User.Comments', '', 'User.Eco2', 'Edge.Cuts', '', 'F.Courtyard', 'B.Courtyard',
  '', '', '', '', '', '', '', '', '', '',
];

function FilterCheck({ text }) {
  return (
    <label className="flex h-[21px] items-center gap-2.5 whitespace-nowrap">
      <span className="relative flex size-4 shrink-0">
        <input type="checkbox" defaultChecked className="size-4 appearance-none rounded-[3px] bg-[#5a5a5a]" />
        <svg viewBox="0 0 16 16" className="pointer-events-none absolute inset-0 size-4" fill="none" aria-hidden="true">
          <path d="M3.500 8.500 7 12.500 13 3.500" stroke="#f0f0f0" strokeWidth="2.200" />
        </svg>
      </span>
      {text}
    </label>
  );
}

function EditorPanel() {
  return (
    <aside className="flex w-[327px] shrink-0 flex-col overflow-hidden bg-[#2f2f2f] text-[#c4c4c4]">
      <div className="h-[22px] shrink-0 bg-[#1c1c1c]" />
      <div className="mx-[2px] mt-[30px] flex min-h-0 flex-1 flex-col rounded-md border border-[#484848] bg-[#343434]">
        <div className="-mt-[14px] mr-5 flex h-7 shrink-0 self-end rounded-lg border border-[#4a4a4a] bg-[#363636] pr-1 text-[15px] text-[#e6e6e6]">
          {['Objects', 'Nets'].map((t) => <button key={t} type="button" className="px-3.5">{t}</button>)}
        </div>
        <ul className="mt-2 flex min-h-0 flex-1 flex-col text-[15px]">
          {EDITOR_LAYERS.map((name, i) => (
            <li key={i} className={clsx('mr-0.5 flex min-h-0 flex-1 items-center pl-[134px] leading-5', name === 'Edge.Cuts' && 'bg-[#424242]')}>
              {name}
            </li>
          ))}
        </ul>
        <p className="mb-1 pl-[86px] text-[15px] leading-[22px] text-[#6b6b6b]">Layer Display Options</p>
      </div>
      <div className="flex shrink-0 flex-col pr-[9px] pl-[70px] text-[15px] leading-5">
        <div className="h-[27px]" />
        <LineDropdown id="editor-presets" />
        <label htmlFor="editor-viewports" className="mt-[5px] mb-[3px]">Viewports (Option+Tab):</label>
        <LineDropdown id="editor-viewports" />
      </div>
      <div className="mt-[19px] h-5 shrink-0 bg-[#1e1e1e]" />
      <div className="flex h-[86px] shrink-0 gap-2 pt-[7px] pl-[11px] text-[15px] text-[#dcdcdc]">
        <svg viewBox="0 0 20 20" className="mt-6 size-5" fill="none" aria-hidden="true">
          <path d="M3 9 13 1l4 5-10 9-5-2z" stroke="#c8c8c8" strokeWidth="2" />
        </svg>
        <div className="ml-[22px] w-[123px] shrink-0 pt-[21px] text-[#b4b4b4]">
          {['Footprints', 'Tracks', 'Pads'].map((t) => <FilterCheck key={t} text={t} />)}
        </div>
        <div>
          {['Locked items', 'Text', 'Vias', 'Graphics'].map((t) => <FilterCheck key={t} text={t} />)}
        </div>
      </div>
    </aside>
  );
}

function EditorCanvas() {
  return (
    <main className="min-w-0 flex-1 bg-[#000e22]">
      <svg className="h-full w-full" aria-hidden="true">
        <defs>
          <pattern id="grid" x="27.500" y="33" width="47.170" height="47.170" patternUnits="userSpaceOnUse">
            <circle cx="1" cy="1" r="0.900" fill="#5f7384" />
          </pattern>
        </defs>
        <rect width="100%" height="100%" fill="url(#grid)" />
      </svg>
    </main>
  );
}

export default function App() {
  return (
    <div className="relative flex h-screen flex-col overflow-hidden bg-[#323232] font-[Inter,sans-serif]">
      <TopToolbar />
      <div className="flex min-h-0 flex-1">
        <SideToolbar />
        <EditorCanvas />
        <EditorPanel />
      </div>
      <ViewerWindow />
    </div>
  );
}
